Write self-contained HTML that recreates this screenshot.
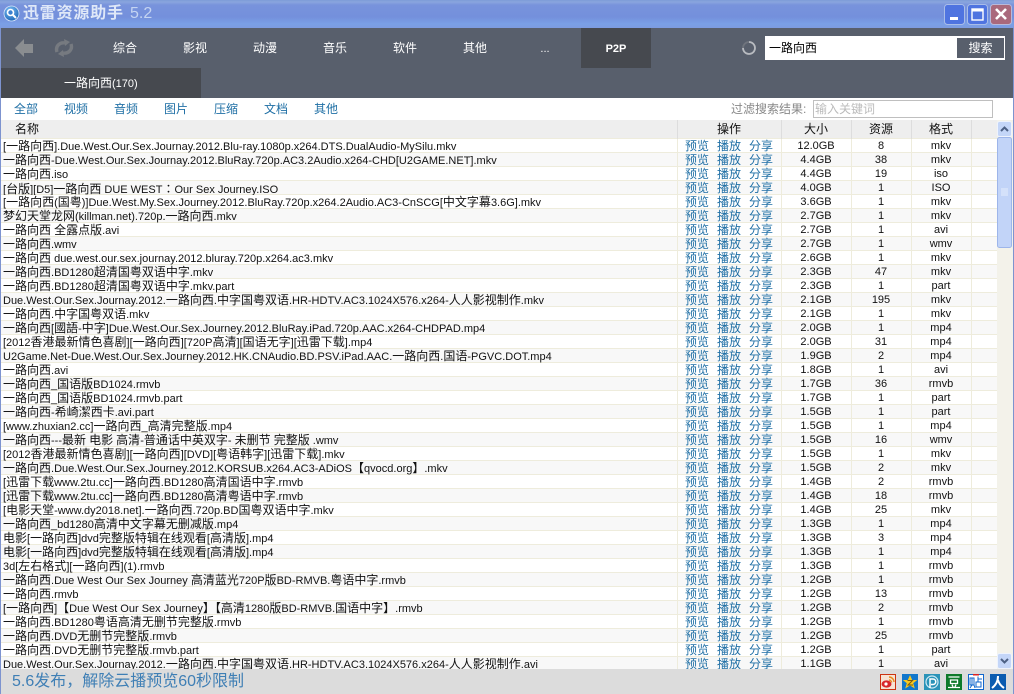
<!DOCTYPE html>
<html><head><meta charset="utf-8"><style>
*{box-sizing:border-box}
html,body{margin:0;padding:0;width:1014px;height:694px;overflow:hidden;background:#fff}
body{position:relative;font-family:"Liberation Sans","WenQuanYi Zen Hei","Noto Sans CJK SC",sans-serif;font-size:12px;color:#111}
u{text-decoration:none;font-size:11px}
.a{position:absolute;white-space:nowrap}
#title{left:0;top:0;width:1014px;height:28px;background:linear-gradient(#7d9bd8 0,#8aa5de 2px,#7893dc 5px,#7490dc 17px,#7aa0e6 24px,#7d9ce0 28px)}
#bar{left:1px;top:28px;width:1012px;height:70px;background:#585f6c}
.nav{top:28px;width:70px;height:40px;line-height:40px;text-align:center;color:#fff;font-size:12px}
#tb{left:1px;top:139px;width:996px;height:530px;overflow:hidden}
.r{position:relative;height:14px;line-height:13px;border-bottom:1px solid #eeecdc;background:#fff}
.r:nth-child(even){background:#f8f8f8}
.r b{font-weight:normal;position:absolute;top:1px;height:13px;text-align:center;white-space:nowrap;font-size:11px}
.r .n{left:2px;text-align:left;font-size:12px}
.r .o{left:684px;width:100px;text-align:left;color:#1f6fa5;font-size:12px}
.r .o i{font-style:normal;position:absolute;top:0;left:0}
.r .o i+i{left:32px}
.r .o i+i+i{left:64px}
.r .s{left:780px;width:70px}
.r .c{left:850px;width:60px}
.r .f{left:910px;width:60px}
.v{position:absolute;top:139px;width:1px;height:530px;background:#eeecdc}
.w{position:absolute;top:120px;width:1px;height:19px;background:#ddd}
.h{position:absolute;top:121px;height:18px;line-height:17px;text-align:center;color:#111}
.t{top:101px;color:#1f6fa5;line-height:16px}
</style></head><body>
<div class="a" id="title"></div>
<svg class="a" style="left:3px;top:5px" width="17" height="17" viewBox="0 0 17 17"><defs><radialGradient id="g" cx=".4" cy=".3" r=".8"><stop offset="0" stop-color="#7fc0f5"/><stop offset="1" stop-color="#0f5bb0"/></radialGradient></defs><circle cx="8.5" cy="8.5" r="7.5" fill="url(#g)" stroke="#dfe9fa" stroke-width=".8"/><circle cx="7.5" cy="7.5" r="3" fill="#3a80cf" stroke="#fff" stroke-width="1.6"/><path d="M10 10l3 3" stroke="#fff" stroke-width="2"/></svg>
<div class="a" style="left:23px;top:5px;font-size:16px;line-height:18px;font-weight:bold;color:#dfe8f8;letter-spacing:.8px">迅雷资源助手</div>
<div class="a" style="left:130px;top:5px;font-size:16px;line-height:18px;color:#c4d4f2">5.2</div>
<svg class="a" style="left:944px;top:4px" width="68" height="21" viewBox="0 0 68 21">
<rect x=".5" y=".5" width="20" height="20" rx="3" fill="#4f74e0" stroke="#a9bde8"/><rect x="6" y="13" width="8" height="3" fill="#fff"/>
<rect x="23.5" y=".5" width="20" height="20" rx="3" fill="#4f74e0" stroke="#a9bde8"/><rect x="28" y="5" width="11" height="11" fill="none" stroke="#fff" stroke-width="1.4"/><rect x="28" y="5" width="11" height="2.5" fill="#fff"/>
<rect x="46.5" y=".5" width="21" height="20" rx="3" fill="#a9697c" stroke="#b9b9d8"/><path d="M52 5l10 10M62 5L52 15" stroke="#fff" stroke-width="2.6"/></svg>
<div class="a" style="left:0;top:28px;width:1px;height:666px;background:#7d93cf"></div>
<div class="a" style="left:1013px;top:28px;width:1px;height:666px;background:#7d93cf"></div>
<div class="a" id="bar"></div>
<svg class="a" style="left:14px;top:38px" width="20" height="20" viewBox="0 0 20 20"><path d="M1 10L10 1v5h9v9h-9v4z" fill="#8a8d90"/></svg>
<svg class="a" style="left:54px;top:38px" width="20" height="20" viewBox="0 0 20 20" fill="none" stroke="#767a80" stroke-width="3.4"><path d="M3 14C1 8 6 4 11 5"/><path d="M17 6c2 6-3 10-8 9"/><path d="M10 1l6 3-5 4zM10 19l-6-3 5-4z" fill="#767a80" stroke="none"/></svg>
<div class="a" style="left:581px;top:28px;width:70px;height:40px;background:#46494f"></div>
<div class="a nav" style="left:90px">综合</div><div class="a nav" style="left:160px">影视</div><div class="a nav" style="left:230px">动漫</div><div class="a nav" style="left:300px">音乐</div><div class="a nav" style="left:370px">软件</div><div class="a nav" style="left:440px">其他</div><div class="a nav" style="left:510px"><u>...</u></div><div class="a nav" style="left:581px;font-weight:bold"><u>P2P</u></div>
<svg class="a" style="left:741px;top:40px" width="16" height="16" viewBox="0 0 16 16" fill="none"><path d="M8 2a6 6 0 1 1-6 6" stroke="#b8bbc0" stroke-width="1.8"/><path d="M2 8a6 6 0 0 1 6-6" stroke="#6f747d" stroke-width="1.8"/></svg>
<div class="a" style="left:765px;top:36px;width:240px;height:24px;background:#fff"></div>
<div class="a" style="left:769px;top:36px;line-height:24px;color:#000;font-size:12px">一路向西</div>
<div class="a" style="left:957px;top:38px;width:47px;height:20px;line-height:20px;background:#585f6c;color:#fff;text-align:center">搜索</div>
<div class="a" style="left:1px;top:68px;width:200px;height:30px;background:#46494f"></div>
<div class="a" style="left:64px;top:68px;line-height:30px;color:#fff">一路向西<u>(170)</u></div>
<div class="a t" style="left:14px">全部</div><div class="a t" style="left:64px">视频</div><div class="a t" style="left:114px">音频</div><div class="a t" style="left:164px">图片</div><div class="a t" style="left:214px">压缩</div><div class="a t" style="left:264px">文档</div><div class="a t" style="left:314px">其他</div>
<div class="a" style="left:731px;top:101px;line-height:16px;color:#888">过滤搜索结果:</div>
<div class="a" style="left:813px;top:100px;width:180px;height:18px;border:1px solid #bfbfbf;line-height:16px;padding-left:1px;color:#bbb">输入关键词</div>
<div class="a" style="left:1px;top:120px;width:996px;height:19px;background:#eee;border-bottom:1px solid #eeecdc"></div>
<div class="a" id="tb"><div class="r"><b class="n"><u>[</u>一路向西<u>].Due.West.Our.Sex.Journay.2012.Blu-ray.1080p.x264.DTS.DualAudio-MySilu.mkv</u></b><b class="o"><i>预览</i><i>播放</i><i>分享</i></b><b class="s">12.0GB</b><b class="c">8</b><b class="f">mkv</b></div>
<div class="r"><b class="n">一路向西<u>-Due.West.Our.Sex.Journay.2012.BluRay.720p.AC3.2Audio.x264-CHD[U2GAME.NET].mkv</u></b><b class="o"><i>预览</i><i>播放</i><i>分享</i></b><b class="s">4.4GB</b><b class="c">38</b><b class="f">mkv</b></div>
<div class="r"><b class="n">一路向西<u>.iso</u></b><b class="o"><i>预览</i><i>播放</i><i>分享</i></b><b class="s">4.4GB</b><b class="c">19</b><b class="f">iso</b></div>
<div class="r"><b class="n"><u>[</u>台版<u>][D5]</u>一路向西<u> DUE WEST</u><span style="font-family:'Noto Sans CJK TC',sans-serif">：</span><u>Our Sex Journey.ISO</u></b><b class="o"><i>预览</i><i>播放</i><i>分享</i></b><b class="s">4.0GB</b><b class="c">1</b><b class="f">ISO</b></div>
<div class="r"><b class="n"><u>[</u>一路向西<u>(</u>国粤<u>)]Due.West.My.Sex.Journey.2012.BluRay.720p.x264.2Audio.AC3-CnSCG[</u>中文字幕<u>3.6G].mkv</u></b><b class="o"><i>预览</i><i>播放</i><i>分享</i></b><b class="s">3.6GB</b><b class="c">1</b><b class="f">mkv</b></div>
<div class="r"><b class="n">梦幻天堂龙网<u>(killman.net).720p.</u>一路向西<u>.mkv</u></b><b class="o"><i>预览</i><i>播放</i><i>分享</i></b><b class="s">2.7GB</b><b class="c">1</b><b class="f">mkv</b></div>
<div class="r"><b class="n">一路向西<u> </u>全露点版<u>.avi</u></b><b class="o"><i>预览</i><i>播放</i><i>分享</i></b><b class="s">2.7GB</b><b class="c">1</b><b class="f">avi</b></div>
<div class="r"><b class="n">一路向西<u>.wmv</u></b><b class="o"><i>预览</i><i>播放</i><i>分享</i></b><b class="s">2.7GB</b><b class="c">1</b><b class="f">wmv</b></div>
<div class="r"><b class="n">一路向西<u> due.west.our.sex.journay.2012.bluray.720p.x264.ac3.mkv</u></b><b class="o"><i>预览</i><i>播放</i><i>分享</i></b><b class="s">2.6GB</b><b class="c">1</b><b class="f">mkv</b></div>
<div class="r"><b class="n">一路向西<u>.BD1280</u>超清国粤双语中字<u>.mkv</u></b><b class="o"><i>预览</i><i>播放</i><i>分享</i></b><b class="s">2.3GB</b><b class="c">47</b><b class="f">mkv</b></div>
<div class="r"><b class="n">一路向西<u>.BD1280</u>超清国粤双语中字<u>.mkv.part</u></b><b class="o"><i>预览</i><i>播放</i><i>分享</i></b><b class="s">2.3GB</b><b class="c">1</b><b class="f">part</b></div>
<div class="r"><b class="n"><u>Due.West.Our.Sex.Journay.2012.</u>一路向西<u>.</u>中字国粤双语<u>.HR-HDTV.AC3.1024X576.x264-</u>人人影视制作<u>.mkv</u></b><b class="o"><i>预览</i><i>播放</i><i>分享</i></b><b class="s">2.1GB</b><b class="c">195</b><b class="f">mkv</b></div>
<div class="r"><b class="n">一路向西<u>.</u>中字国粤双语<u>.mkv</u></b><b class="o"><i>预览</i><i>播放</i><i>分享</i></b><b class="s">2.1GB</b><b class="c">1</b><b class="f">mkv</b></div>
<div class="r"><b class="n">一路向西<u>[</u>國語<u>-</u>中字<u>]Due.West.Our.Sex.Journey.2012.BluRay.iPad.720p.AAC.x264-CHDPAD.mp4</u></b><b class="o"><i>预览</i><i>播放</i><i>分享</i></b><b class="s">2.0GB</b><b class="c">1</b><b class="f">mp4</b></div>
<div class="r"><b class="n"><u>[2012</u>香港最新情色喜剧<u>][</u>一路向西<u>][720P</u>高清<u>][</u>国语无字<u>][</u>迅雷下载<u>].mp4</u></b><b class="o"><i>预览</i><i>播放</i><i>分享</i></b><b class="s">2.0GB</b><b class="c">31</b><b class="f">mp4</b></div>
<div class="r"><b class="n"><u>U2Game.Net-Due.West.Our.Sex.Journey.2012.HK.CNAudio.BD.PSV.iPad.AAC.</u>一路向西<u>.</u>国语<u>-PGVC.DOT.mp4</u></b><b class="o"><i>预览</i><i>播放</i><i>分享</i></b><b class="s">1.9GB</b><b class="c">2</b><b class="f">mp4</b></div>
<div class="r"><b class="n">一路向西<u>.avi</u></b><b class="o"><i>预览</i><i>播放</i><i>分享</i></b><b class="s">1.8GB</b><b class="c">1</b><b class="f">avi</b></div>
<div class="r"><b class="n">一路向西<u>_</u>国语版<u>BD1024.rmvb</u></b><b class="o"><i>预览</i><i>播放</i><i>分享</i></b><b class="s">1.7GB</b><b class="c">36</b><b class="f">rmvb</b></div>
<div class="r"><b class="n">一路向西<u>_</u>国语版<u>BD1024.rmvb.part</u></b><b class="o"><i>预览</i><i>播放</i><i>分享</i></b><b class="s">1.7GB</b><b class="c">1</b><b class="f">part</b></div>
<div class="r"><b class="n">一路向西<u>-</u>希崎潔西卡<u>.avi.part</u></b><b class="o"><i>预览</i><i>播放</i><i>分享</i></b><b class="s">1.5GB</b><b class="c">1</b><b class="f">part</b></div>
<div class="r"><b class="n"><u>[www.zhuxian2.cc]</u>一路向西<u>_</u>高清完整版<u>.mp4</u></b><b class="o"><i>预览</i><i>播放</i><i>分享</i></b><b class="s">1.5GB</b><b class="c">1</b><b class="f">mp4</b></div>
<div class="r"><b class="n">一路向西<u>---</u>最新<u> </u>电影<u> </u>高清<u>-</u>普通话中英双字<u>- </u>未删节<u> </u>完整版<u> .wmv</u></b><b class="o"><i>预览</i><i>播放</i><i>分享</i></b><b class="s">1.5GB</b><b class="c">16</b><b class="f">wmv</b></div>
<div class="r"><b class="n"><u>[2012</u>香港最新情色喜剧<u>][</u>一路向西<u>][DVD][</u>粤语韩字<u>][</u>迅雷下载<u>].mkv</u></b><b class="o"><i>预览</i><i>播放</i><i>分享</i></b><b class="s">1.5GB</b><b class="c">1</b><b class="f">mkv</b></div>
<div class="r"><b class="n">一路向西<u>.Due.West.Our.Sex.Journey.2012.KORSUB.x264.AC3-ADiOS</u>【<u>qvocd.org</u>】<u>.mkv</u></b><b class="o"><i>预览</i><i>播放</i><i>分享</i></b><b class="s">1.5GB</b><b class="c">2</b><b class="f">mkv</b></div>
<div class="r"><b class="n"><u>[</u>迅雷下载<u>www.2tu.cc]</u>一路向西<u>.BD1280</u>高清国语中字<u>.rmvb</u></b><b class="o"><i>预览</i><i>播放</i><i>分享</i></b><b class="s">1.4GB</b><b class="c">2</b><b class="f">rmvb</b></div>
<div class="r"><b class="n"><u>[</u>迅雷下载<u>www.2tu.cc]</u>一路向西<u>.BD1280</u>高清粤语中字<u>.rmvb</u></b><b class="o"><i>预览</i><i>播放</i><i>分享</i></b><b class="s">1.4GB</b><b class="c">18</b><b class="f">rmvb</b></div>
<div class="r"><b class="n"><u>[</u>电影天堂<u>-www.dy2018.net].</u>一路向西<u>.720p.BD</u>国粤双语中字<u>.mkv</u></b><b class="o"><i>预览</i><i>播放</i><i>分享</i></b><b class="s">1.4GB</b><b class="c">25</b><b class="f">mkv</b></div>
<div class="r"><b class="n">一路向西<u>_bd1280</u>高清中文字幕无删减版<u>.mp4</u></b><b class="o"><i>预览</i><i>播放</i><i>分享</i></b><b class="s">1.3GB</b><b class="c">1</b><b class="f">mp4</b></div>
<div class="r"><b class="n">电影<u>[</u>一路向西<u>]dvd</u>完整版特辑在线观看<u>[</u>高清版<u>].mp4</u></b><b class="o"><i>预览</i><i>播放</i><i>分享</i></b><b class="s">1.3GB</b><b class="c">3</b><b class="f">mp4</b></div>
<div class="r"><b class="n">电影<u>[</u>一路向西<u>]dvd</u>完整版特辑在线观看<u>[</u>高清版<u>].mp4</u></b><b class="o"><i>预览</i><i>播放</i><i>分享</i></b><b class="s">1.3GB</b><b class="c">1</b><b class="f">mp4</b></div>
<div class="r"><b class="n"><u>3d[</u>左右格式<u>][</u>一路向西<u>](1).rmvb</u></b><b class="o"><i>预览</i><i>播放</i><i>分享</i></b><b class="s">1.3GB</b><b class="c">1</b><b class="f">rmvb</b></div>
<div class="r"><b class="n">一路向西<u>.Due West Our Sex Journey </u>高清蓝光<u>720P</u>版<u>BD-RMVB.</u>粤语中字<u>.rmvb</u></b><b class="o"><i>预览</i><i>播放</i><i>分享</i></b><b class="s">1.2GB</b><b class="c">1</b><b class="f">rmvb</b></div>
<div class="r"><b class="n">一路向西<u>.rmvb</u></b><b class="o"><i>预览</i><i>播放</i><i>分享</i></b><b class="s">1.2GB</b><b class="c">13</b><b class="f">rmvb</b></div>
<div class="r"><b class="n"><u>[</u>一路向西<u>]</u>【<u>Due West Our Sex Journey</u>】【高清<u>1280</u>版<u>BD-RMVB.</u>国语中字】<u>.rmvb</u></b><b class="o"><i>预览</i><i>播放</i><i>分享</i></b><b class="s">1.2GB</b><b class="c">2</b><b class="f">rmvb</b></div>
<div class="r"><b class="n">一路向西<u>.BD1280</u>粤语高清无删节完整版<u>.rmvb</u></b><b class="o"><i>预览</i><i>播放</i><i>分享</i></b><b class="s">1.2GB</b><b class="c">1</b><b class="f">rmvb</b></div>
<div class="r"><b class="n">一路向西<u>.DVD</u>无删节完整版<u>.rmvb</u></b><b class="o"><i>预览</i><i>播放</i><i>分享</i></b><b class="s">1.2GB</b><b class="c">25</b><b class="f">rmvb</b></div>
<div class="r"><b class="n">一路向西<u>.DVD</u>无删节完整版<u>.rmvb.part</u></b><b class="o"><i>预览</i><i>播放</i><i>分享</i></b><b class="s">1.2GB</b><b class="c">1</b><b class="f">part</b></div>
<div class="r"><b class="n"><u>Due.West.Our.Sex.Journay.2012.</u>一路向西<u>.</u>中字国粤双语<u>.HR-HDTV.AC3.1024X576.x264-</u>人人影视制作<u>.avi</u></b><b class="o"><i>预览</i><i>播放</i><i>分享</i></b><b class="s">1.1GB</b><b class="c">1</b><b class="f">avi</b></div></div>
<div class="w" style="left:677px"></div><div class="w" style="left:781px"></div><div class="w" style="left:851px"></div><div class="w" style="left:911px"></div><div class="w" style="left:971px"></div>
<div class="v" style="left:677px"></div><div class="v" style="left:781px"></div><div class="v" style="left:851px"></div><div class="v" style="left:911px"></div><div class="v" style="left:971px"></div>
<div class="h" style="left:15px">名称</div><div class="h" style="left:677px;width:104px">操作</div><div class="h" style="left:781px;width:70px">大小</div><div class="h" style="left:851px;width:60px">资源</div><div class="h" style="left:911px;width:60px">格式</div>
<svg class="a" style="left:997px;top:120px" width="16" height="549" viewBox="0 0 16 549">
<rect width="16" height="549" fill="#f3f2ea"/>
<rect x=".5" y="1.5" width="14" height="15" rx="2" fill="#c4d6f8" stroke="#eef3fd"/><path d="M4 11l3.5-3.5L11 11" fill="none" stroke="#4d6185" stroke-width="2"/>
<rect x=".5" y="17.5" width="14" height="110" rx="2" fill="#c2d4f8" stroke="#9db5ea"/><path d="M4 69h7M4 71h7M4 73h7M4 75h7" stroke="#e6eefc"/>
<rect x=".5" y="533.5" width="14" height="15" rx="2" fill="#c4d6f8" stroke="#eef3fd"/><path d="M4 539l3.5 3.5L11 539" fill="none" stroke="#4d6185" stroke-width="2"/></svg>
<div class="a" style="left:1px;top:669px;width:1012px;height:25px;background:#dcdcdc"></div>
<div class="a" style="left:12px;top:672px;font-size:16px;line-height:20px;color:#3f7fb5">5.6发布，解除云播预览60秒限制</div>
<svg class="a" style="left:880px;top:674px" width="126" height="16" viewBox="0 0 126 16">
<rect x=".5" y=".5" width="15" height="15" fill="#f6e3d4" stroke="#cc3311"/><ellipse cx="6.5" cy="10" rx="5" ry="3.6" fill="#d8262a"/><circle cx="6" cy="10" r="1.6" fill="#fff"/><path d="M9 3a5 5 0 0 1 5 5M9 6a2.5 2.5 0 0 1 2.500 2.500" fill="none" stroke="#e88a1a" stroke-width="1.4"/>
<rect x="22" width="16" height="16" fill="#1177cc"/><path d="M30 1l2.200 5h5l-4 3.200 1.600 5.300L30 11.500l-4.800 3 1.600-5.300-4-3.200h5z" fill="#f8c820"/><path d="M27.500 6.500h5l-4.500 4.500h5" fill="none" stroke="#7a5a10" stroke-width="1"/>
<rect x="44" width="16" height="16" fill="#2a93b8"/><circle cx="52" cy="8" r="6" fill="none" stroke="#cfeaf4" stroke-width="1.200"/><path d="M50 14V5h3a2.500 2.500 0 0 1 0 5.500h-2" fill="none" stroke="#fff" stroke-width="1.500"/>
<rect x="66" width="16" height="16" fill="#0f7a2a"/><path d="M68.500 3h11M70.500 6h7v3.500h-7zM72 10.500l1 2.500M76 10.500l-1 2.500M68 13.500h12" fill="none" stroke="#fff" stroke-width="1.300"/>
<rect x="88.500" y=".5" width="15" height="15" fill="#fff" stroke="#1166cc"/><rect x="93" y="0" width="6" height="1.500" fill="#dd2222"/><path d="M90 4h4v7h-4zM92 4v7M90 14l2-3M94 11l1 3M98 2.500v5M98 5h4M96 8h5v5h-5z" fill="none" stroke="#1166cc" stroke-width="1"/>
<rect x="110" width="16" height="16" fill="#0b5cb0"/><path d="M118 2c0 5-2 9-6 12M118 6c1 4 3 6 6 8" fill="none" stroke="#fff" stroke-width="2"/></svg>
</body></html>
